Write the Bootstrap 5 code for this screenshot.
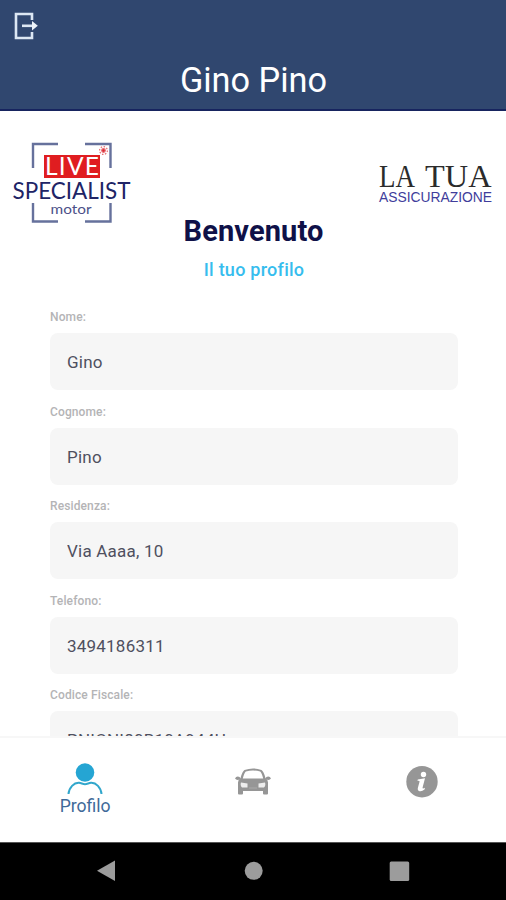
<!DOCTYPE html>
<html lang="it">
<head>
<meta charset="utf-8">
<meta name="viewport" content="width=device-width, initial-scale=1">
<title>Gino Pino</title>
<link href="https://cdn.jsdelivr.net/npm/bootstrap@5.3.0/dist/css/bootstrap.min.css" rel="stylesheet">
<style>
body{font-family:Roboto,"Liberation Sans",sans-serif;height:900px;background:#fff}
.topbar{height:111px;background:#30476f;border-bottom:2px solid #17245f;padding:12px 13px 0 14px}
.topbar svg{display:block}
.topbar h1{font-size:34.3px;line-height:40px;font-weight:400;margin:20px 0 0}
.profile{min-height:0;height:625px}
.logos{height:103px;padding:29px 13px 0 12px}
.tua{margin-top:17px}
.welcome{font-size:29px;line-height:34px;font-weight:700;color:#0f1148;letter-spacing:.1px;padding-left:1px}
.subtitle{font-size:18px;line-height:24px;font-weight:500;color:#36bdee;letter-spacing:.25px;margin:10px 0 26px;padding-left:2px}
.fields{padding:0 48px 0 50px}
.entry{height:94.6px}
.entry label{display:block;font-size:12px;line-height:18px;font-weight:500;color:#b4b4b6;letter-spacing:.12px;margin-bottom:7px}
.entry .form-control{height:57px;border:0;border-radius:8px;background:#f6f6f6;color:#4f505f;font-size:17px;letter-spacing:.22px;padding:1px 17px 0}
.tabs{height:106px;border-top:2px solid #f7f7f7;padding-left:1px}
.tabs .nav-link{height:104px;padding:24px 0 0;color:#3f6a99;font-size:17.6px;line-height:22px}
.tabs svg{display:block}
.sysbar{height:58px;background:#000;border-top:1px solid #555}
</style>
<script src="https://cdn.jsdelivr.net/npm/bootstrap@5.3.0/dist/js/bootstrap.bundle.min.js"></script>
</head>
<body class="d-flex flex-column overflow-hidden">
<header class="topbar text-white flex-shrink-0">
  <svg width="26" height="28" viewBox="0 0 26 28" fill="none" stroke="#dce7f3" stroke-width="2.6"><path d="M18 8V2H2v24h16v-6"/><path d="M8 13.800h12"/><path d="M18 9l5.800 4.800-5.800 4.800z" fill="#eef4fa" stroke="none"/></svg>
  <h1 class="text-center">Gino Pino</h1>
</header>
<main class="profile overflow-hidden flex-shrink-0">
  <div class="logos d-flex justify-content-between align-items-start">
    <svg class="overflow-visible" width="120" height="86" viewBox="12 140 120 86" role="img" aria-label="Live Specialist Motor">
      <path d="M58 144H33v24M85 144h25.500v24M33 203v18.500h25M85 221.500h25.500V203" fill="none" stroke="#66719c" stroke-width="2.400"/>
      <rect x="44" y="155" width="56" height="23" fill="#e01d20"/>
      <text x="45" y="175.300" font-family="Lato" font-size="24.500" fill="#fff" textLength="54" lengthAdjust="spacing">LIVE</text>
      <g stroke="#e66b70" stroke-width="1.200"><circle cx="103.500" cy="150.500" r="1.800" fill="#d92732"/><circle cx="103.500" cy="150.500" r="3.900" fill="none" stroke-dasharray="1.500 1.500"/></g>
      <text x="12.500" y="199" font-family="Lato" font-size="23.500" fill="#202466" textLength="118" lengthAdjust="spacingAndGlyphs">SPECIALIST</text>
      <text x="50.500" y="213.500" font-family="Lato" font-size="14" fill="#4b5088" textLength="41" lengthAdjust="spacingAndGlyphs">motor</text>
    </svg>
    <svg class="tua overflow-visible" width="115" height="50" viewBox="378 157 115 50" role="img" aria-label="La Tua Assicurazione">
      <g font-family="Liberation Serif" font-size="32" fill="#2b2b2b">
        <text x="379" y="186.500" textLength="36" lengthAdjust="spacingAndGlyphs">LA</text>
        <text x="425" y="186.500" textLength="66.500" lengthAdjust="spacingAndGlyphs">TUA</text>
      </g>
      <text x="379" y="202" font-family="Liberation Sans" font-size="14" fill="#403d9b" textLength="113" lengthAdjust="spacingAndGlyphs">ASSICURAZIONE</text>
    </svg>
  </div>
  <h2 class="welcome text-center mb-0">Benvenuto</h2>
  <p class="subtitle text-center">Il tuo profilo</p>
  <form class="fields">
    <div class="entry"><label for="nome">Nome:</label><input class="form-control" id="nome" value="Gino"></div>
    <div class="entry"><label for="cognome">Cognome:</label><input class="form-control" id="cognome" value="Pino"></div>
    <div class="entry"><label for="residenza">Residenza:</label><input class="form-control" id="residenza" value="Via Aaaa, 10"></div>
    <div class="entry"><label for="telefono">Telefono:</label><input class="form-control" id="telefono" value="3494186311"></div>
    <div class="entry"><label for="cf">Codice Fiscale:</label><input class="form-control" id="cf" value="PNIGNI80B10A944U"></div>
  </form>
</main>
<nav class="tabs nav nav-justified flex-nowrap bg-white flex-shrink-0">
  <a class="nav-item nav-link d-flex flex-column align-items-center" href="#">
    <svg width="36" height="33" viewBox="0 0 36 33"><circle cx="18" cy="10.500" r="9.300" fill="#25a5d3"/><path d="M1.500 32C2 25.500 7 20.500 12 20.800c2.500.4 4 1.400 6 1.400s3.500-1 6-1.400c5-.3 10 4.700 10.500 11.200" fill="none" stroke="#32a7cc" stroke-width="2"/></svg>
    <span>Profilo</span>
  </a>
  <a class="nav-item nav-link d-flex flex-column align-items-center" href="#" aria-label="Auto">
    <svg width="36" height="40" viewBox="0 0 36 40"><path fill="#969696" fill-rule="evenodd" d="M9.500 8Q18 4.800 26.500 8Q28.500 9 30.500 16Q33 17.500 33 20.500V31.500q0 1-1 1h-3q-1 0-1-1V29H8v2.500q0 1-1 1H4q-1 0-1-1V20.500Q3 17.500 5.500 16Q7.500 9 9.500 8ZM10.800 9.500Q9.200 11 7.800 16.500H28.200Q26.800 11 25.200 9.500Q18 7.500 10.800 9.500Z"/><path d="M6 20.500l6.500 1v4H7Q5 24 6 20.500ZM30 20.500l-6.500 1v4H29q2-1.500 1-5Z" fill="#eee"/><path d="M14 26h8" stroke="#aaa"/><ellipse cx="2.800" cy="16.300" rx="2.400" ry="1.800" fill="#969696"/><ellipse cx="33.200" cy="16.300" rx="2.400" ry="1.800" fill="#969696"/></svg>
  </a>
  <a class="nav-item nav-link d-flex flex-column align-items-center" href="#" aria-label="Informazioni">
    <svg width="36" height="40" viewBox="0 0 36 40"><circle cx="18" cy="19.700" r="15.700" fill="#969696"/><circle cx="19.500" cy="12.500" r="2.700" fill="#fff"/><path d="M13.800 17.500l7.200-1.200-2.400 9.200q-.4 1.800 2.400.3l-.5 1.700q-2.500 2.200-5 1.700-2.300-.6-1.600-3.400l1.700-6.200q.1-1-2.200-.8z" fill="#fff"/></svg>
  </a>
</nav>
<div class="sysbar flex-shrink-0">
  <svg class="d-block" width="506" height="57" viewBox="0 843 506 57" fill="#9c9c9c"><path d="M97 870.700L115 860.500v20.500z"/><circle cx="253.700" cy="870.800" r="9"/><rect x="389.700" y="861.500" width="19.500" height="19.500" rx="1.500"/></svg>
</div>
</body>
</html>
